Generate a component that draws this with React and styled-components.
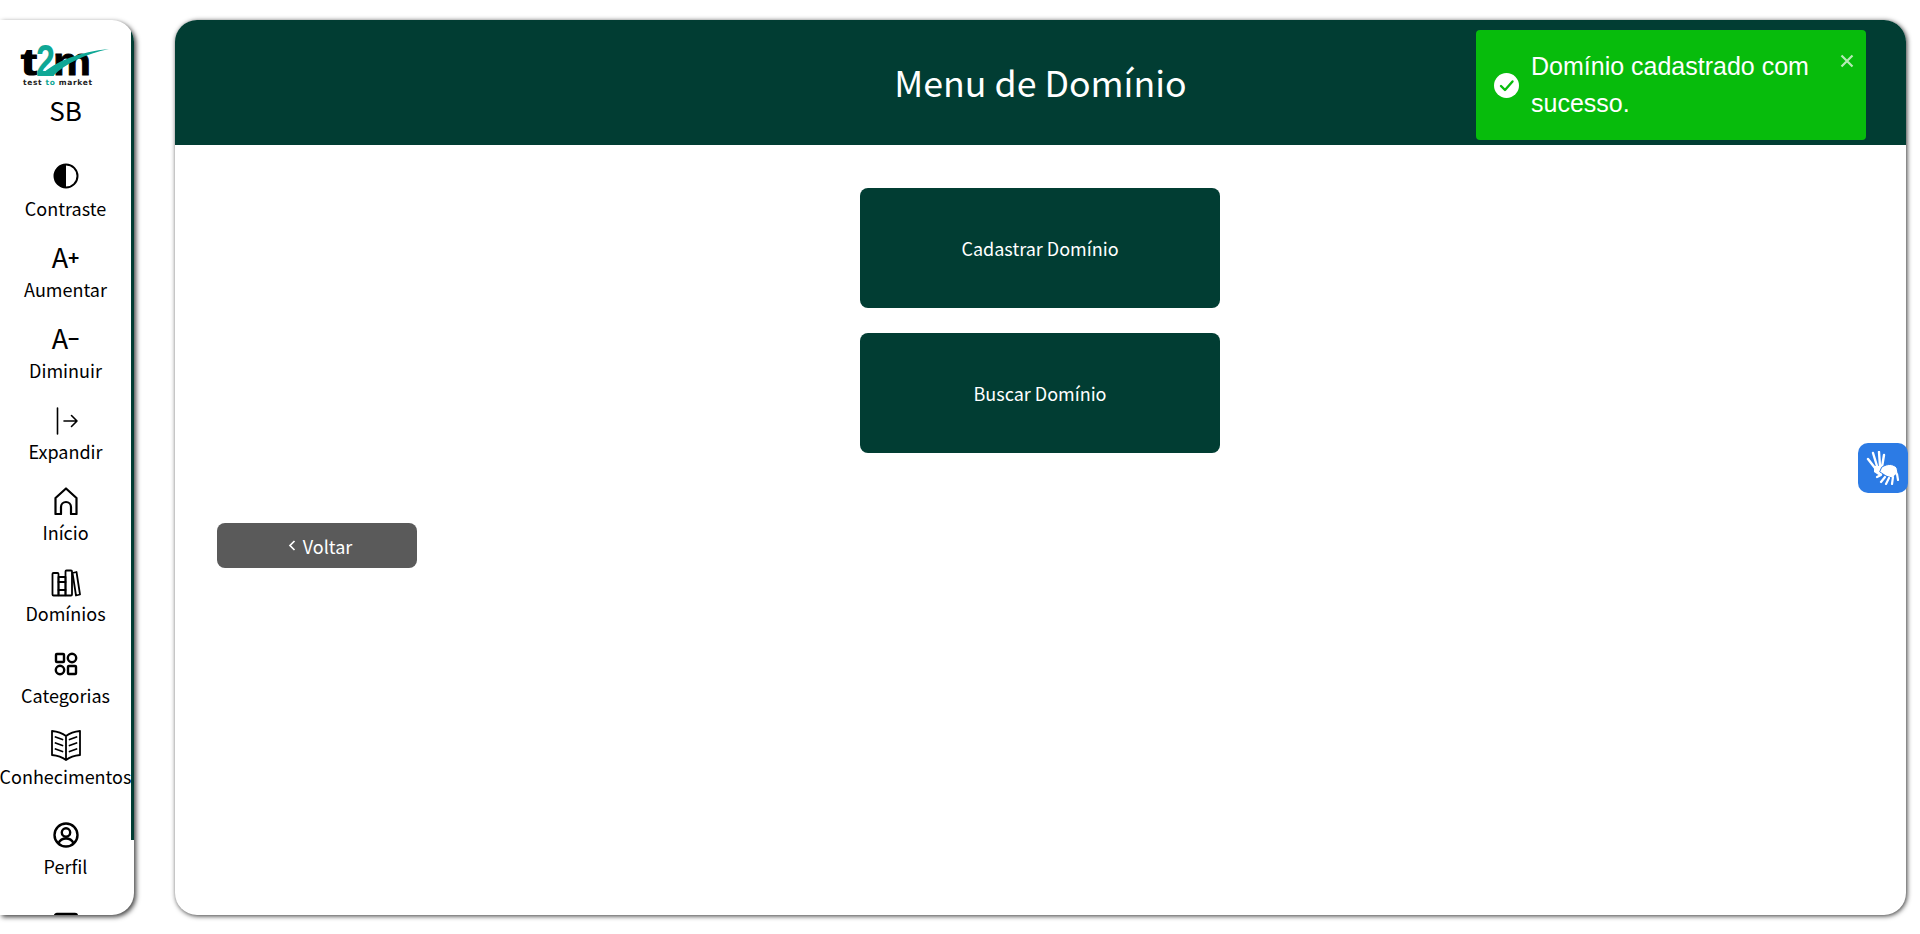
import React from 'react';
import styled, { createGlobalStyle } from 'styled-components';

const GREEN = '#013d33';
const FONT = '"Noto Sans CJK JP", "Noto Sans", sans-serif';

const Global = createGlobalStyle`
  html, body { margin: 0; padding: 0; background: #fff; overflow: hidden; }
  * { box-sizing: border-box; }
  body { font-family: ${FONT}; }
`;

const Page = styled.div`
  position: relative;
  display: flex;
  align-items: flex-start;
  gap: 41px;
  width: 1920px;
  height: 934px;
  padding: 20px 14px 0 0;
`;

const Sidebar = styled.nav`
  flex: none;
  width: 134px;
  height: 895px;
  background: #fff;
  border-radius: 0 22px 22px 0;
  box-shadow: 2px 2px 5px rgba(0, 0, 0, 0.75);
  overflow: hidden;
`;

const SideInner = styled.div`
  height: 820px;
  border-right: 3px solid ${GREEN};
  padding-top: 25px;
`;

const Brand = styled.div`
  width: 131px;
  display: flex;
  flex-direction: column;
  align-items: center;
  margin-bottom: 35px;
`;

const LogoSvg = styled.svg`
  overflow: visible;
`;

const Initials = styled.div`
  font-size: 26px;
  line-height: 30px;
  color: #000;
  margin-top: 10px;
`;

const Item = styled.div`
  width: 131px;
  height: ${p => p.$h || 81.1}px;
  display: flex;
  flex-direction: column;
  align-items: center;
  color: #000;
`;

const IconSlot = styled.div`
  height: 32px;
  padding-top: ${p => p.$drop || 0}px;
  display: flex;
  align-items: center;
  justify-content: center;
  font-size: 27px;
  line-height: 32px;
  color: #000;
`;

const Sign = styled.span`
  font-size: 19px;
  font-weight: 700;
  vertical-align: 4px;
`;

const Label = styled.div`
  font-size: 18px;
  line-height: 26px;
  margin-top: 3px;
  white-space: nowrap;
`;

const Main = styled.main`
  flex: 1;
  height: 895px;
  background: #fff;
  border-radius: 22px;
  box-shadow: 1px 1px 5px rgba(0, 0, 0, 0.8);
  overflow: hidden;
`;

const Header = styled.header`
  height: 125px;
  padding-bottom: 3px;
  background: ${GREEN};
  display: flex;
  align-items: center;
  justify-content: center;
`;

const Title = styled.h1`
  margin: 0;
  color: #fff;
  font-size: 35.7px;
  font-weight: 400;
`;

const Menu = styled.div`
  display: flex;
  flex-direction: column;
  align-items: center;
  gap: 25px;
  padding: 43px 1px 0 0;
`;

const MenuButton = styled.button`
  width: 360px;
  height: 120px;
  border: 0;
  border-radius: 8px;
  background: ${GREEN};
  color: #fff;
  font-family: ${FONT};
  font-size: 18px;
`;

const BackRow = styled.div`
  padding: 70px 0 0 42px;
`;

const BackButton = styled.button`
  width: 200px;
  height: 45px;
  padding: 0 0 0 6px;
  border: 0;
  border-radius: 8px;
  background: #5a5a5a;
  color: #fff;
  font-family: ${FONT};
  font-size: 18px;
  line-height: 22px;
  display: flex;
  align-items: center;
  justify-content: center;
  gap: 7px;
`;

const Toast = styled.div`
  position: absolute;
  top: 30px;
  left: 1476px;
  width: 390px;
  height: 110px;
  background: #07bc0c;
  border-radius: 4px;
  color: #fff;
  font-family: "Liberation Sans", Arial, sans-serif;
  font-size: 25px;
  line-height: 37px;
  display: flex;
  align-items: center;
  gap: 12px;
  padding: 0 12px 0 18px;
`;

const ToastText = styled.div`
  flex: 1;
`;

const ToastClose = styled.span`
  position: absolute;
  top: 24px;
  right: 12px;
  display: flex;
  opacity: 0.7;
`;

const HandButton = styled.div`
  position: absolute;
  top: 443px;
  left: 1858px;
  width: 50px;
  height: 50px;
  background: #2c7be5;
  border-radius: 10px;
  display: flex;
  align-items: center;
  justify-content: center;
`;

const Logo = () => (
  <LogoSvg width="92" height="40" viewBox="0 0 92 40">
    <text x="1" y="30" fontFamily="Liberation Sans" fontWeight="700" fontSize="36" fill="#000" stroke="#000" strokeWidth="1.2" textLength="16" lengthAdjust="spacingAndGlyphs">t</text>
    <text x="33" y="30" fontFamily="Liberation Sans" fontWeight="700" fontSize="38" fill="#000" stroke="#000" strokeWidth="0.8" textLength="38" lengthAdjust="spacingAndGlyphs">m</text>
    <path d="M20 31 C36 15 60 7 89 4 C66 9 46 18 33 31 Z" fill="#0fa795" />
    <text x="16" y="31" fontFamily="Liberation Sans" fontWeight="700" fontSize="44" fill="#0fa795" textLength="19" lengthAdjust="spacingAndGlyphs">2</text>
    <text x="3" y="39.500" fontFamily="DejaVu Sans" fontWeight="700" fontSize="7.500" fill="#222" textLength="69">test <tspan fill="#0fa795">to</tspan> market</text>
  </LogoSvg>
);

const stroke = { fill: 'none', stroke: '#000', strokeWidth: 1.8, strokeLinecap: 'round', strokeLinejoin: 'round' };

const ContrastIcon = () => (
  <svg width="26" height="26" viewBox="0 0 26 26">
    <circle cx="13" cy="13" r="11.500" fill="#fff" stroke="#000" strokeWidth="2" />
    <path d="M13 1.500 A11.500 11.500 0 0 0 13 24.500 Z" fill="#000" />
  </svg>
);

const ExpandIcon = () => (
  <svg width="26" height="28" viewBox="0 0 26 28" {...stroke}>
    <path d="M4.500 1v26M11 14h13M18.500 8.500l5.500 5.500-5.500 5.500" strokeWidth="1.600" />
  </svg>
);

const HomeIcon = () => (
  <svg width="24" height="28" viewBox="0 0 24 28" {...stroke} strokeWidth="2.200">
    <path d="M1.500 27V11L12 1.500 22.500 11v16h-5.500v-7a5 5 0 0 0-10 0v7Z" />
  </svg>
);

const BooksIcon = () => (
  <svg width="30" height="28" viewBox="0 0 30 28" {...stroke}>
    <rect x="1.500" y="4" width="6" height="22.500" rx="1" />
    <rect x="7.500" y="8" width="7" height="18.500" />
    <rect x="14.500" y="1.500" width="6.500" height="25" rx="1" />
    <path d="M21.500 4l4-1 3.500 22.500-4 1ZM7.500 13h7M7.500 21h7" />
  </svg>
);

const CategoriesIcon = () => (
  <svg width="24" height="24" viewBox="0 0 24 24" {...stroke} strokeWidth="2.400">
    <rect x="2" y="2" width="8" height="8" rx="0.800" />
    <circle cx="18" cy="6" r="4.200" />
    <circle cx="6" cy="18" r="4.200" />
    <rect x="14" y="14" width="8" height="8" rx="0.800" />
  </svg>
);

const OpenBookIcon = () => (
  <svg width="32" height="31" viewBox="0 0 32 31" {...stroke}>
    <path d="M16 6C12 3 7 1.500 2 1v24c5 .5 10 2 14 5 4-3 9-4.500 14-5V1c-5 .5-10 2-14 5Zm0 0v24" />
    <path d="M5.500 7l7 2.500M5.500 13l7 2.500M5.500 19l7 2.500M26.500 7l-7 2.500M26.500 13l-7 2.500M26.500 19l-7 2.500" />
  </svg>
);

const ProfileIcon = () => (
  <svg width="26" height="26" viewBox="0 0 26 26" {...stroke} strokeWidth="2.400">
    <circle cx="13" cy="13" r="11.500" />
    <circle cx="13" cy="10.500" r="4.200" />
    <path d="M5.500 21c1.500-3 4-4.500 7.500-4.500s6 1.500 7.500 4.500" />
  </svg>
);

// only the top edge of this one shows, the sidebar clips the rest
const ClippedIcon = () => (
  <svg width="26" height="26" viewBox="0 0 26 26" {...stroke} strokeWidth="2.400">
    <rect x="2" y="3" width="22" height="20" rx="2" />
  </svg>
);

const HandsIcon = () => (
  <svg width="38" height="34" viewBox="0 0 38 34" fill="#fff" stroke="#fff" strokeLinecap="round">
    <path d="M4 8l7 9M9 2l4 13M15 1l1 14M20 4l-2 12" strokeWidth="2.400" fill="none" />
    <path d="M10 15h10l4 4-8 6-6-4Z" stroke="none" />
    <path d="M18 16c6-4 12-3 15 1l1 5-6 5-6-2-6-4Z" stroke="#2c7be5" strokeWidth="1" />
    <path d="M17 24l-4 2M21 26l-4 5M25 27l-3 6M29 26l-1 7M33 23l1 6" strokeWidth="2.200" fill="none" />
  </svg>
);

const navItems = [
  { label: 'Contraste', icon: <ContrastIcon /> },
  { label: 'Aumentar', icon: <>A<Sign>+</Sign></> },
  { label: 'Diminuir', icon: <>A<Sign>−</Sign></> },
  { label: 'Expandir', icon: <ExpandIcon />, drop: 3 },
  { label: 'Início', icon: <HomeIcon />, drop: 2 },
  { label: 'Domínios', icon: <BooksIcon />, drop: 4 },
  { label: 'Categorias', icon: <CategoriesIcon />, drop: 2 },
  { label: 'Conhecimentos', icon: <OpenBookIcon />, drop: 3, h: 90 },
  { label: 'Perfil', icon: <ProfileIcon />, drop: 3, h: 90 },
];

const App = () => (
  <Page>
    <Global />
    <Sidebar>
      <SideInner>
        <Brand>
          <Logo />
          <Initials>SB</Initials>
        </Brand>
        {navItems.map(item => (
          <Item key={item.label} $h={item.h}>
            <IconSlot $drop={item.drop}>{item.icon}</IconSlot>
            <Label>{item.label}</Label>
          </Item>
        ))}
        <Item>
          <IconSlot><ClippedIcon /></IconSlot>
        </Item>
      </SideInner>
    </Sidebar>
    <Main>
      <Header>
        <Title>Menu de Domínio</Title>
      </Header>
      <Menu>
        <MenuButton>Cadastrar Domínio</MenuButton>
        <MenuButton>Buscar Domínio</MenuButton>
      </Menu>
      <BackRow>
        <BackButton>
          <svg width="8" height="11" viewBox="0 0 8 11">
            <path d="M6.500 1L2 5.500l4.500 4.500" fill="none" stroke="#fff" strokeWidth="1.700" />
          </svg>
          Voltar
        </BackButton>
      </BackRow>
    </Main>
    <Toast>
      <svg width="25" height="25" viewBox="0 0 25 25">
        <circle cx="12.500" cy="12.500" r="12.500" fill="#fff" />
        <path d="M7 13l4 4 7.500-8.500" fill="none" stroke="#07bc0c" strokeWidth="2.400" strokeLinecap="round" strokeLinejoin="round" />
      </svg>
      <ToastText>Domínio cadastrado com sucesso.</ToastText>
      <ToastClose>
        <svg width="14" height="14" viewBox="0 0 14 14">
          <path d="M1.500 1.500l11 11M12.500 1.500l-11 11" stroke="#fff" strokeWidth="2.200" />
        </svg>
      </ToastClose>
    </Toast>
    <HandButton><HandsIcon /></HandButton>
  </Page>
);

export default App;
